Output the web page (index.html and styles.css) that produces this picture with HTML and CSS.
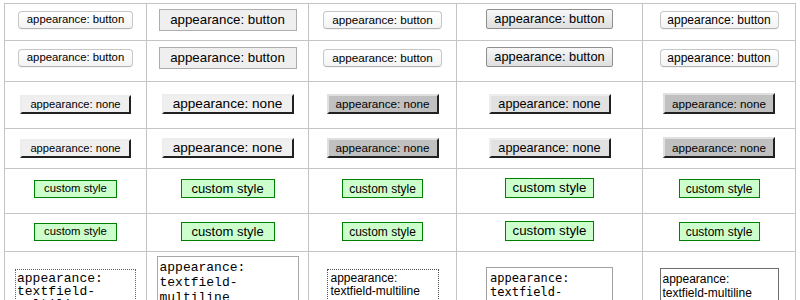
FILE: index.html
```html
<!DOCTYPE html>
<html>
<head>
<meta charset="utf-8">
<link rel="stylesheet" href="styles.css">
</head>
<body>
<div class="grid">
  <div class="cell r1"><span class="btn mac c1">appearance: button</span></div>
  <div class="cell r1"><span class="btn win">appearance: button</span></div>
  <div class="cell r1"><span class="btn mac c3">appearance: button</span></div>
  <div class="cell r1"><span class="btn gtk">appearance: button</span></div>
  <div class="cell r1"><span class="btn mac c5">appearance: button</span></div>

  <div class="cell r2"><span class="btn mac c1">appearance: button</span></div>
  <div class="cell r2"><span class="btn win">appearance: button</span></div>
  <div class="cell r2"><span class="btn mac c3">appearance: button</span></div>
  <div class="cell r2"><span class="btn gtk">appearance: button</span></div>
  <div class="cell r2"><span class="btn mac c5">appearance: button</span></div>

  <div class="cell r3"><span class="btn none n1">appearance: none</span></div>
  <div class="cell r3"><span class="btn none n2">appearance: none</span></div>
  <div class="cell r3"><span class="btn none n3">appearance: none</span></div>
  <div class="cell r3"><span class="btn none n4">appearance: none</span></div>
  <div class="cell r3"><span class="btn none n5">appearance: none</span></div>

  <div class="cell r4"><span class="btn none n1">appearance: none</span></div>
  <div class="cell r4"><span class="btn none n2">appearance: none</span></div>
  <div class="cell r4"><span class="btn none n3">appearance: none</span></div>
  <div class="cell r4"><span class="btn none n4">appearance: none</span></div>
  <div class="cell r4"><span class="btn none n5">appearance: none</span></div>

  <div class="cell r5"><span class="btn custom k1">custom style</span></div>
  <div class="cell r5"><span class="btn custom k2">custom style</span></div>
  <div class="cell r5"><span class="btn custom k3">custom style</span></div>
  <div class="cell r5"><span class="btn custom k4">custom style</span></div>
  <div class="cell r5"><span class="btn custom k5">custom style</span></div>

  <div class="cell r6"><span class="btn custom k1">custom style</span></div>
  <div class="cell r6"><span class="btn custom k2">custom style</span></div>
  <div class="cell r6"><span class="btn custom k3">custom style</span></div>
  <div class="cell r6"><span class="btn custom k4">custom style</span></div>
  <div class="cell r6"><span class="btn custom k5">custom style</span></div>

  <div class="cell r7"><div class="ta t1">appearance:<br>textfield-<br>multiline</div></div>
  <div class="cell r7"><div class="ta t2">appearance:<br>textfield-<br>multiline</div></div>
  <div class="cell r7"><div class="ta t3">appearance:<br>textfield-multiline</div></div>
  <div class="cell r7"><div class="ta t4">appearance:<br>textfield-<br>multiline</div></div>
  <div class="cell r7"><div class="ta t5">appearance:<br>textfield-multiline</div></div>
</div>
</body>
</html>
```

FILE: styles.css
```css
html, body {
  margin: 0;
  padding: 0;
  background: #fff;
  overflow: hidden;
}
body {
  padding: 3px 0 0 4px;
  font-family: "Liberation Sans", Arial, sans-serif;
  color: #000;
}
.grid {
  display: grid;
  grid-template-columns: 142px 162px 148px 186px 153px;
  grid-template-rows: 37px 41px 47px 40px 45px 38px 60px;
  border-top: 1px solid #c4c4c4;
  border-left: 1px solid #c4c4c4;
  width: max-content;
}
.cell {
  border-right: 1px solid #c4c4c4;
  border-bottom: 1px solid #c4c4c4;
  display: flex;
  justify-content: center;
  align-items: flex-start;
  overflow: hidden;
}
.r1 { padding-top: 5px; }
.r2 { padding-top: 6px; }
.r3 { padding-top: 10px; }
.r4 { padding-top: 7px; }
.r5 { padding-top: 9px; }
.r6 { padding-top: 7px; }
.r7 { padding-top: 0; }

.btn {
  display: inline-flex;
  align-items: center;
  justify-content: center;
  box-sizing: border-box;
  white-space: nowrap;
  line-height: 1;
}

/* mac-like rounded push buttons */
.mac {
  height: 18px;
  background: linear-gradient(#ffffff, #f3f3f3);
  border: 1px solid #c6c6c6;
  border-bottom-color: #b4b4b4;
  border-radius: 4px;
  box-shadow: 0 1px 0 rgba(0,0,0,0.04);
}
.c1 { font-size: 11.3px; width: 115px; margin-top: 2px; }
.c3 { font-size: 11.7px; width: 119px; margin-top: 2px; }
.c5 { font-size: 12px; width: 119px; margin-top: 2px; }

/* windows-like */
.win {
  width: 138px;
  height: 22px;
  font-size: 13.3px;
  background: #efefef;
  border: 1px solid #adadad;
}
/* gtk-like */
.gtk {
  width: 127px;
  height: 20px;
  font-size: 12.8px;
  background: linear-gradient(#f7f7f7, #dedede);
  border: 1px solid #8e8e8e;
  border-radius: 2px;
}

/* appearance: none (outset) */
.none {
  border: 2px outset #dcdcdc;
  border-top-color: #ededed;
  border-left-color: #ededed;
  border-right-color: #767676;
  border-bottom-color: #767676;
}
.n1 { width: 111px; height: 19px; font-size: 11.2px; background: #efefef; margin-top: 3px; }
.n2 { width: 132px; height: 20px; font-size: 13.6px; background: #efefef; margin-top: 2px; }
.n3 { width: 112px; height: 20px; font-size: 11.7px; background: #c0c0c0; margin-top: 2px; border-top-color: #e0e0e0; border-left-color: #e0e0e0; }
.n4 { width: 122px; height: 20px; font-size: 12.7px; background: #e1e1e1; margin-top: 2px; }
.n5 { width: 112px; height: 21px; font-size: 11.7px; background: #c0c0c0; margin-top: 1px; border-top-color: #e0e0e0; border-left-color: #e0e0e0; }

/* custom style */
.custom {
  background: #ccffcc;
  border: 1px solid #008000;
}
.k1 { width: 83px; height: 18px; font-size: 11.3px; margin-top: 2px; }
.k2 { width: 94px; height: 19px; font-size: 13px; margin-top: 1px; }
.k3 { width: 81px; height: 19px; font-size: 12px; margin-top: 1px; }
.k4 { width: 89px; height: 20px; font-size: 13.3px; margin-top: 0; }
.k5 { width: 81px; height: 19px; font-size: 12px; margin-top: 1px; }

/* textareas */
.ta {
  box-sizing: border-box;
  height: 60px;
  text-align: left;
  white-space: nowrap;
  flex: none;
}
.t1 {
  width: 121px;
  margin-top: 17px;
  border: 1px dotted #606060;
  font-family: "Liberation Mono", "Courier New", monospace;
  font-size: 13px;
  line-height: 13px;
  padding: 2px 1px;
}
.t2 {
  width: 142px;
  margin-top: 4px;
  border: 1px solid #a9a9a9;
  font-family: "Liberation Mono", "Courier New", monospace;
  font-size: 13px;
  line-height: 15px;
  padding: 3px 2px;
}
.t3 {
  width: 112px;
  margin-top: 17px;
  border: 1px dotted #505050;
  font-family: "Liberation Sans", Arial, sans-serif;
  font-size: 12px;
  line-height: 13px;
  padding: 2px 3px;
}
.t4 {
  width: 127px;
  margin-top: 15px;
  border: 1px solid #a0a0a0;
  font-family: "DejaVu Sans Mono", monospace;
  font-size: 12px;
  line-height: 14px;
  padding: 3px 3px;
}
.t5 {
  width: 119px;
  margin-top: 16px;
  border: 1px solid #6e6e6e;
  font-family: "Liberation Sans", Arial, sans-serif;
  font-size: 12px;
  line-height: 14px;
  padding: 3px 2px;
}
```
